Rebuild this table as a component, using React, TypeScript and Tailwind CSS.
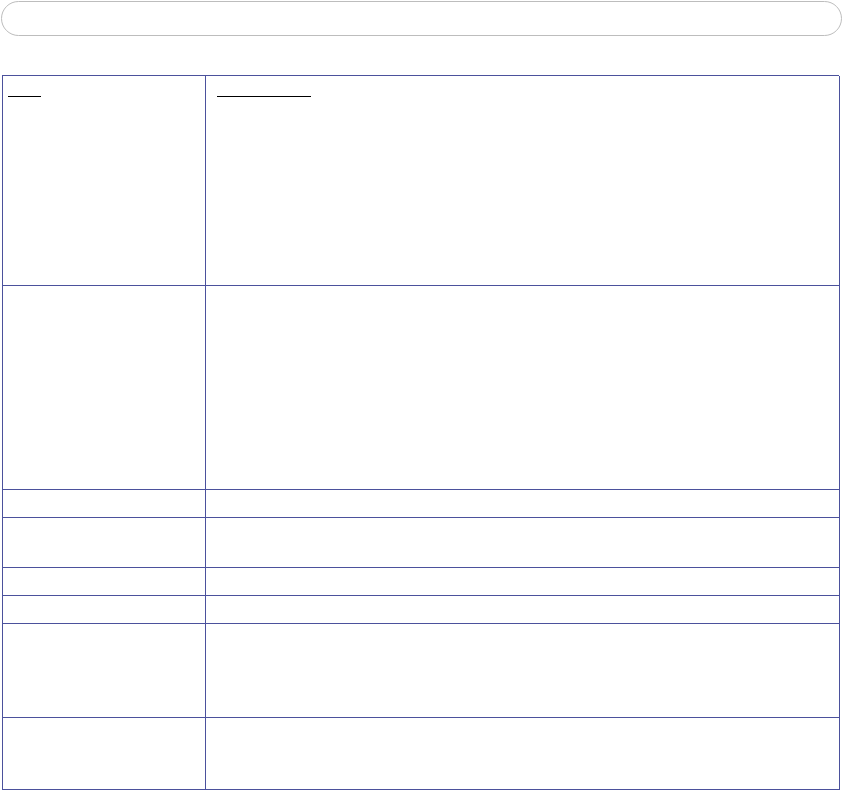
import React from "react";

const rows = [210, 204, 28, 50, 28, 28, 94, 72];

export default function App() {
  return (
    <div className="w-[842px] h-[791px] bg-white relative overflow-hidden" style={{ fontFamily: '"Liberation Sans", Arial, sans-serif' }}>
      <div className="ml-[1px] mt-[1px] w-[841px] h-[35px] rounded-full border border-[#bdbdbd]" />
      <div className="ml-[2px] mt-[39px] w-[837px] border-l border-t border-[#4b519c] grid grid-cols-[203px_634px]">
        {rows.map((h, i) => (
          <React.Fragment key={i}>
            <div className="border-r border-b border-[#4b519c]" style={{ height: h }}>
              {i === 0 && <div className="ml-[5px] mt-[20px] w-[33px] h-px bg-black" />}
            </div>
            <div className="border-r border-b border-[#4b519c]" style={{ height: h }}>
              {i === 0 && <div className="ml-[11px] mt-[20px] w-[94px] h-px bg-black" />}
            </div>
          </React.Fragment>
        ))}
      </div>
    </div>
  );
}
